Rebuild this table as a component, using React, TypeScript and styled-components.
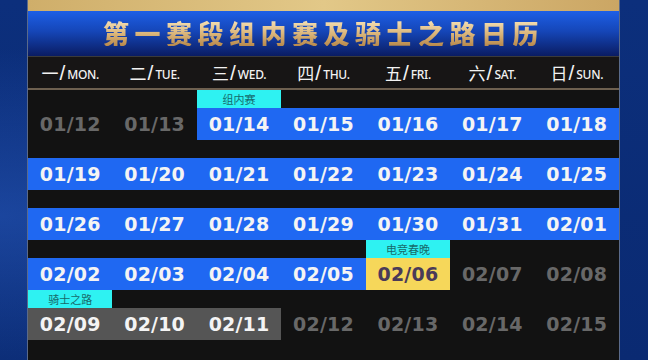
import styled, { createGlobalStyle } from 'styled-components';

type Band = 'none' | 'blue' | 'gold' | 'grey';
type Tone = 'past' | 'live' | 'future';

interface Day {
  date: string;
  band: Band;
  tone: Tone;
  tag?: string;
}

const GlobalStyle = createGlobalStyle`
  html, body {
    margin: 0;
    padding: 0;
    background: #0b2d74;
  }
  * {
    box-sizing: border-box;
  }
`;

const weekdays = [
  { cn: '一', en: 'MON.' },
  { cn: '二', en: 'TUE.' },
  { cn: '三', en: 'WED.' },
  { cn: '四', en: 'THU.' },
  { cn: '五', en: 'FRI.' },
  { cn: '六', en: 'SAT.' },
  { cn: '日', en: 'SUN.' },
];

const d = (date: string, band: Band, tone: Tone, tag?: string): Day => ({ date, band, tone, tag });

const weeks: Day[][] = [
  [
    d('01/12', 'none', 'past'),
    d('01/13', 'none', 'past'),
    d('01/14', 'blue', 'live', '组内赛'),
    d('01/15', 'blue', 'live'),
    d('01/16', 'blue', 'live'),
    d('01/17', 'blue', 'live'),
    d('01/18', 'blue', 'live'),
  ],
  [
    d('01/19', 'blue', 'live'),
    d('01/20', 'blue', 'live'),
    d('01/21', 'blue', 'live'),
    d('01/22', 'blue', 'live'),
    d('01/23', 'blue', 'live'),
    d('01/24', 'blue', 'live'),
    d('01/25', 'blue', 'live'),
  ],
  [
    d('01/26', 'blue', 'live'),
    d('01/27', 'blue', 'live'),
    d('01/28', 'blue', 'live'),
    d('01/29', 'blue', 'live'),
    d('01/30', 'blue', 'live'),
    d('01/31', 'blue', 'live'),
    d('02/01', 'blue', 'live'),
  ],
  [
    d('02/02', 'blue', 'live'),
    d('02/03', 'blue', 'live'),
    d('02/04', 'blue', 'live'),
    d('02/05', 'blue', 'live'),
    d('02/06', 'gold', 'live', '电竞春晚'),
    d('02/07', 'none', 'future'),
    d('02/08', 'none', 'future'),
  ],
  [
    d('02/09', 'grey', 'live', '骑士之路'),
    d('02/10', 'grey', 'live'),
    d('02/11', 'grey', 'live'),
    d('02/12', 'none', 'future'),
    d('02/13', 'none', 'future'),
    d('02/14', 'none', 'future'),
    d('02/15', 'none', 'future'),
  ],
];

const bandColors: Record<Band, string> = {
  none: 'transparent',
  blue: '#1f68f2',
  gold: '#f6d75a',
  grey: '#555555',
};

const Page = styled.div`
  width: 648px;
  height: 360px;
  overflow: hidden;
  padding-left: 27px;
  background:
    radial-gradient(ellipse at 0% 60%, rgba(40, 90, 190, 0.55), transparent 55%),
    linear-gradient(180deg, #0c2f7c 0%, #0a2a72 100%);
`;

const Board = styled.div`
  width: 593px;
  height: 360px;
  display: flex;
  flex-direction: column;
  background: #121212;
  border-left: 1px solid #5a6a8a;
  border-right: 1px solid #5a6a8a;
`;

const GoldStrip = styled.div`
  height: 11px;
  background: linear-gradient(90deg, #cfae6a 0%, #e2c888 50%, #cba664 100%);
`;

const TitleBar = styled.div`
  height: 46px;
  display: flex;
  align-items: center;
  justify-content: center;
  background: linear-gradient(180deg, #1d5fe6 0%, #1546b8 45%, #0a1c62 100%);
  border-bottom: 1px solid #3a3a3a;
`;

const Title = styled.h1`
  margin: 0 0 2px 0;
  font-family: "Noto Sans CJK SC", sans-serif;
  font-weight: 900;
  font-size: 26px;
  letter-spacing: 5.5px;
  line-height: 1;
  background: linear-gradient(180deg, #f6e2b8 0%, #d9b377 55%, #b8894c 100%);
  -webkit-background-clip: text;
  background-clip: text;
  color: transparent;
`;

const HeaderRow = styled.div`
  height: 33px;
  display: grid;
  grid-template-columns: repeat(7, 1fr);
  background: #171515;
  border-bottom: 2px solid #6e6050;
`;

const HeaderCell = styled.div`
  display: flex;
  align-items: center;
  justify-content: center;
  color: #f2f2f2;
`;

const HeaderCn = styled.span`
  font-family: "Noto Sans CJK SC", sans-serif;
  font-size: 17px;
`;

const HeaderSlash = styled.span`
  font-family: "Liberation Sans", sans-serif;
  font-size: 21px;
  font-weight: 300;
  margin: 0 2px 0 1px;
`;

const HeaderEn = styled.span`
  font-family: "Noto Sans", sans-serif;
  font-size: 12px;
  font-weight: 500;
  margin-top: 3px;
  letter-spacing: -0.3px;
`;

const WeekRow = styled.div`
  display: grid;
  grid-template-columns: repeat(7, 1fr);
  height: 50px;
`;

const DayCell = styled.div`
  display: flex;
  flex-direction: column;
`;

const TagSlot = styled.div<{ $on: boolean }>`
  height: 18px;
  display: flex;
  align-items: center;
  justify-content: center;
  background: ${(p) => (p.$on ? '#2ef2f2' : 'transparent')};
  color: #176a6a;
  font-family: "Noto Sans CJK SC", sans-serif;
  font-size: 11px;
`;

const DateBand = styled.div<{ $band: Band; $tone: Tone }>`
  height: 32px;
  display: flex;
  align-items: center;
  justify-content: center;
  background: ${(p) => bandColors[p.$band]};
  color: ${(p) =>
    p.$band === 'gold' ? '#4a3a58' : p.$tone === 'live' ? '#f4f4f4' : '#686868'};
  font-family: "DejaVu Sans", sans-serif;
  font-weight: 700;
  font-size: 19px;
  letter-spacing: 0.2px;
`;

export default function App() {
  return (
    <>
      <GlobalStyle />
      <Page>
        <Board>
          <GoldStrip />
          <TitleBar>
            <Title>第一赛段组内赛及骑士之路日历</Title>
          </TitleBar>
          <HeaderRow>
            {weekdays.map((w) => (
              <HeaderCell key={w.en}>
                <HeaderCn>{w.cn}</HeaderCn>
                <HeaderSlash>/</HeaderSlash>
                <HeaderEn>{w.en}</HeaderEn>
              </HeaderCell>
            ))}
          </HeaderRow>
          {weeks.map((week, i) => (
            <WeekRow key={i}>
              {week.map((day) => (
                <DayCell key={day.date}>
                  <TagSlot $on={!!day.tag}>{day.tag}</TagSlot>
                  <DateBand $band={day.band} $tone={day.tone}>
                    {day.date}
                  </DateBand>
                </DayCell>
              ))}
            </WeekRow>
          ))}
        </Board>
      </Page>
    </>
  );
}
